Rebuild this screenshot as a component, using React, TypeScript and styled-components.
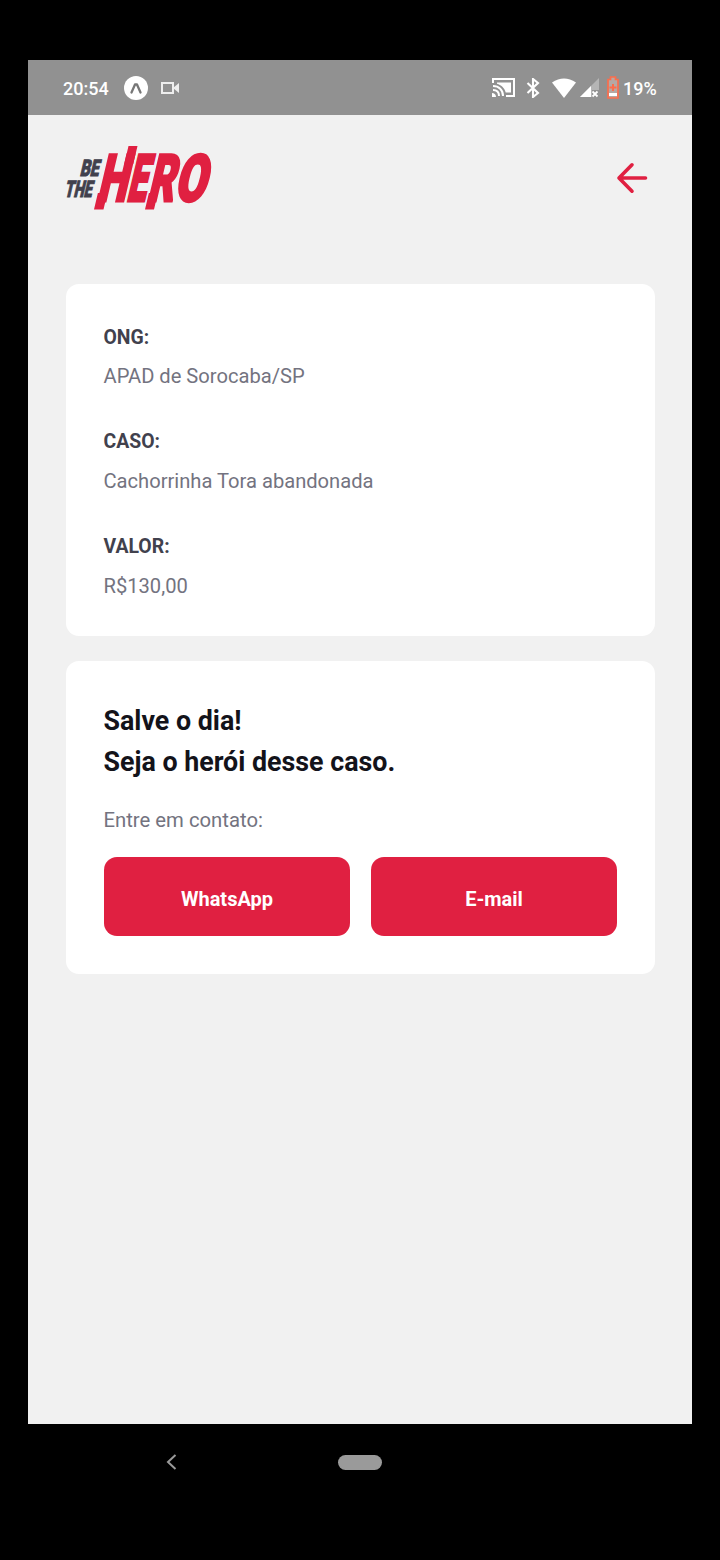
import React from "react";
import styled, { createGlobalStyle } from "styled-components";

const Global = createGlobalStyle`
  * { box-sizing: border-box; }
  body { margin: 0; background: #000; font-family: Roboto, "Liberation Sans", sans-serif; }
  h2, p, dl, dt, dd { margin: 0; }
`;

const Device = styled.div`
  width: 720px;
  height: 1560px;
  padding: 60px 28px 0;
  background: #000;
  display: flex;
  flex-direction: column;
`;

const StatusBar = styled.header`
  height: 55px;
  flex: none;
  padding: 0 35px;
  background: #919191;
  color: #fff;
  display: flex;
  justify-content: space-between;
  align-items: center;
  font-size: 18px;
  font-weight: 500;
`;

const StatusGroup = styled.div`
  display: flex;
  align-items: center;
  svg { display: block; flex: none; }
`;

const Clock = styled.span`
  width: 61px;
  line-height: 24px;
  padding-top: 2px;
`;

const Battery = styled.span`
  width: 34px;
  line-height: 24px;
  padding-top: 2px;
`;

const Screen = styled.main`
  height: 1309px;
  flex: none;
  padding: 32px 37.5px 0;
  background: #f1f1f1;
`;

const TopBar = styled.div`
  height: 63px;
  display: flex;
  justify-content: space-between;
  align-items: center;
  margin-bottom: 74px;
  svg { display: block; overflow: visible; }
`;

const BackButton = styled.button`
  border: 0;
  padding: 0;
  margin: 0 7px 1px 0;
  background: none;
`;

const Card = styled.section<{ $height: number }>`
  height: ${(p) => p.$height}px;
  padding: 38px;
  margin-bottom: 25px;
  border-radius: 13px;
  background: #fff;
`;

const Details = styled.dl`
  padding-top: 1.5px;
`;

const Label = styled.dt`
  font-size: 19.4px;
  font-weight: 700;
  line-height: 28px;
  height: 38.8px;
  color: #41414d;
`;

const Value = styled.dd`
  font-size: 20.15px;
  line-height: 28px;
  height: 66px;
  color: #737380;
`;

const Title = styled.h2`
  position: relative;
  top: 2px;
  font-size: 26.8px;
  font-weight: 700;
  line-height: 41px;
  color: #13131a;
`;

const Hint = styled.p`
  margin-top: 25px;
  font-size: 20.3px;
  line-height: 28px;
  color: #737380;
`;

const Actions = styled.div`
  margin-top: 23px;
  display: grid;
  grid-template-columns: 1fr 1fr;
  gap: 21px;
`;

const Action = styled.button`
  height: 79px;
  border: 0;
  padding: 4px 0 0 1px;
  border-radius: 13px;
  background: #e02041;
  color: #fff;
  font: 700 20px Roboto, "Liberation Sans", sans-serif;
`;

const NavBar = styled.nav`
  height: 76px;
  display: flex;
  align-items: center;
  padding-left: 138px;
  svg { display: block; }
`;

const HomePill = styled.span`
  width: 44px;
  height: 15px;
  margin-left: 161px;
  border-radius: 8px;
  background: #9a9a9a;
`;

const heroLetters = [
  { char: "H", x: -0.3, width: 29.5 },
  { char: "E", x: 29.5, width: 19 },
  { char: "R", x: 50.3, width: 26.2 },
  { char: "O", x: 77.3, width: 31 },
];

const Logo = () => (
  <svg width="149" height="63" viewBox="0 0 149 63" fontFamily="Roboto, sans-serif" fontWeight="900">
    <g fill="#41414d" stroke="#41414d" strokeWidth="1">
      <text transform="translate(13.5 29) skewX(-13) scale(.68 1)" fontSize="23">BE</text>
      <text transform="translate(-2 50) skewX(-13) scale(.63 1)" fontSize="23">THE</text>
    </g>
    <g transform="translate(30.5 54) skewX(-13.3)" fill="#e02041" stroke="#e02041">
      {heroLetters.map((l) => (
        <text key={l.char} x={l.x} textLength={l.width} lengthAdjust="spacingAndGlyphs" strokeWidth="3" fontSize="65">
          {l.char}
        </text>
      ))}
      <path stroke="none" d="M-.5-8h9.500V8.500h-9.500zM19-55h9v18h-9zM50.500-8h9V8.500h-9z" />
    </g>
  </svg>
);

export default function App() {
  return (
    <Device>
      <Global />
      <StatusBar>
        <StatusGroup>
          <Clock>20:54</Clock>
          <svg width="24" height="24" viewBox="0 0 24 24">
            <circle cx="12" cy="12" r="12" fill="#fff" />
            <path d="M7.500 16.500 11 8.500h2l3.500 8" fill="none" stroke="#777" strokeWidth="2.300" strokeLinejoin="round" strokeLinecap="round" />
          </svg>
          <svg width="20" height="14" viewBox="0 0 20 14" style={{ marginLeft: 12 }}>
            <path d="M2 2h11v10H2z" fill="none" stroke="#eee" strokeWidth="2" />
            <path d="m13 7 6-5v10z" fill="#eee" />
          </svg>
        </StatusGroup>
        <StatusGroup>
          <svg width="23" height="19" viewBox="0 0 23 19" fill="none" stroke="#fff" strokeWidth="2">
            <path d="M1 5V1h21v17h-8M1 8c6 0 10 4 10 10M1 12c4 0 6 2 6 6" />
            <path d="M5 4.500h14v10h-5.300C12.500 9.500 9 7 5 5.700z" fill="#fff" stroke="none" />
            <path d="M0 15c2 0 4 1.500 4 4H0z" fill="#fff" stroke="none" />
          </svg>
          <svg width="14" height="20" viewBox="0 0 14 20" style={{ marginLeft: 11 }}>
            <path d="m1.500 5 10.500 10-5 4V1l5 4L1.500 15" fill="none" stroke="#fff" strokeWidth="2.100" />
          </svg>
          <svg width="24" height="20" viewBox="0 0 24 20" style={{ marginLeft: 12 }}>
            <path d="M0 4.500Q12-3.500 24 4.500L12 20z" fill="#fff" />
          </svg>
          <svg width="19" height="20" viewBox="0 0 19 20" style={{ marginLeft: 4 }}>
            <path d="M19 0v12h-7v7H0z" fill="#b5b5b5" />
            <path d="M11 8v11H0z" fill="#fff" />
            <path d="m12.500 13.500 5 5m0-5-5 5" stroke="#fff" strokeWidth="1.800" />
          </svg>
          <svg width="12" height="23" viewBox="0 0 12 23" style={{ marginLeft: 8, marginRight: 4 }}>
            <path d="M1 3.500h2.500V1h5v2.500H11V22H1z" fill="#b5a8a4" stroke="#fb6d4c" strokeWidth="1.700" />
            <path d="M6 8v7M2.500 11.500h7" stroke="#fb6d4c" strokeWidth="2" />
            <path d="M2 17h8v3H2z" fill="#fff" />
          </svg>
          <Battery>19%</Battery>
        </StatusGroup>
      </StatusBar>
      <Screen>
        <TopBar>
          <Logo />
          <BackButton aria-label="Voltar">
            <svg width="32" height="30" viewBox="0 0 32 30" fill="none" stroke="#e02041" strokeWidth="3.600" strokeLinecap="round" strokeLinejoin="round">
              <path d="M29.500 15H3M16 1.800 3 15l13 13.200" />
            </svg>
          </BackButton>
        </TopBar>
        <Card $height={352}>
          <Details>
            <Label>ONG:</Label>
            <Value>APAD de Sorocaba/SP</Value>
            <Label>CASO:</Label>
            <Value>Cachorrinha Tora abandonada</Value>
            <Label>VALOR:</Label>
            <Value>R$130,00</Value>
          </Details>
        </Card>
        <Card $height={313}>
          <Title>Salve o dia!</Title>
          <Title>Seja o herói desse caso.</Title>
          <Hint>Entre em contato:</Hint>
          <Actions>
            <Action>WhatsApp</Action>
            <Action>E-mail</Action>
          </Actions>
        </Card>
      </Screen>
      <NavBar>
        <svg width="11" height="16" viewBox="0 0 11 16">
          <path d="M9.500 1 2 8l7.500 7" fill="none" stroke="#9a9a9a" strokeWidth="2" />
        </svg>
        <HomePill />
      </NavBar>
    </Device>
  );
}
